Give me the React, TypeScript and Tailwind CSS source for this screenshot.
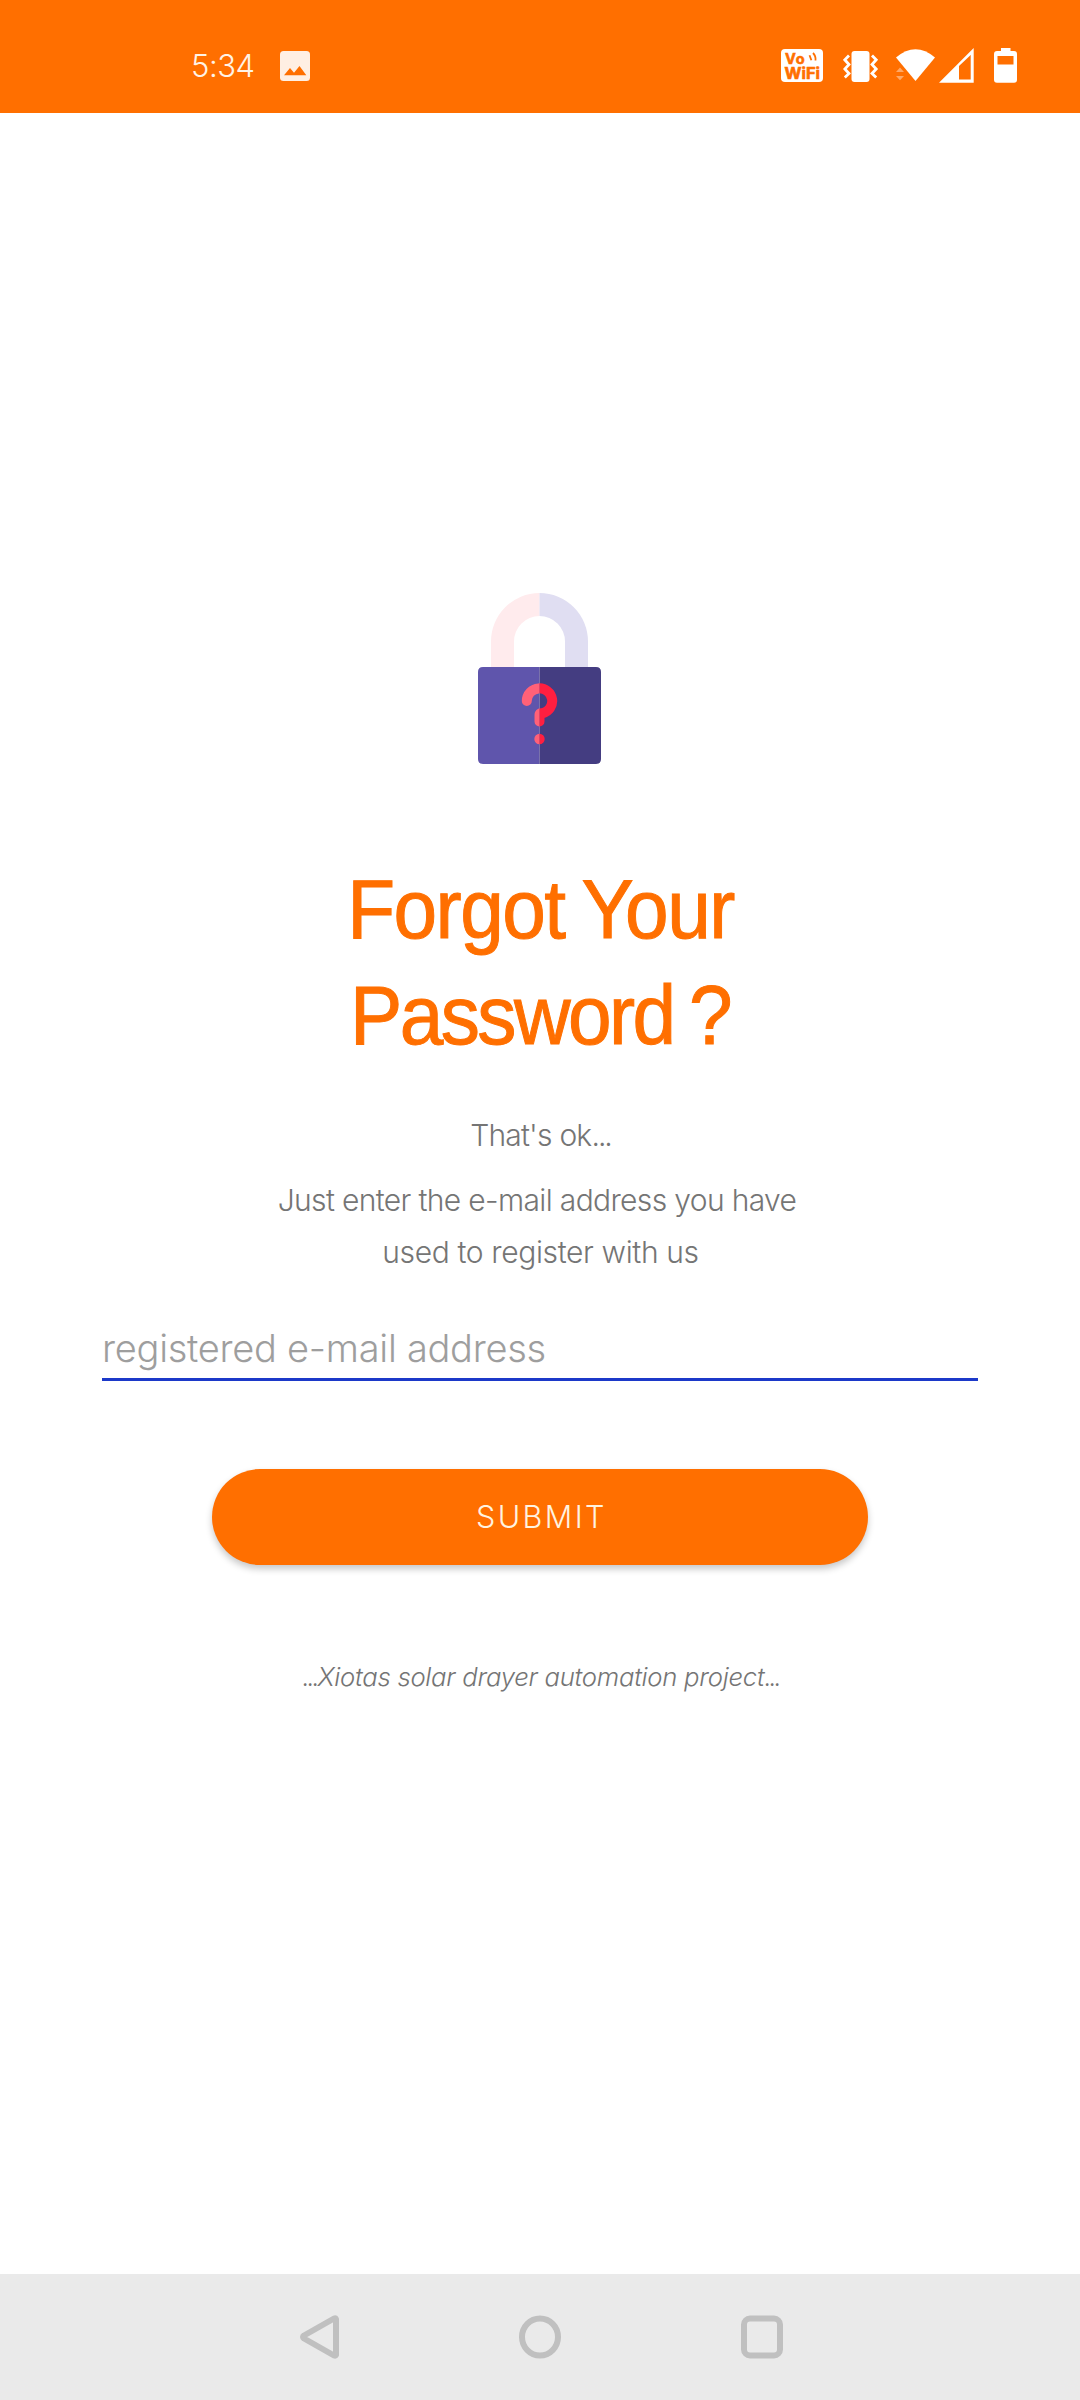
function StatusBar() {
  return (
    <header className="flex h-[113px] shrink-0 items-start bg-[#ff6f00] text-white">
      <span className="ml-[191px] mt-[46px] w-[66px] whitespace-nowrap text-[31px] font-light leading-[40px] tracking-[-0.47px] text-[#fff3e6]">
        5:34
      </span>
      <svg className="ml-[23px] mt-[51px] h-[30px] w-[30px]" viewBox="0 0 30 30">
        <rect width="30" height="30" rx="3.5" fill="#ffefe3" />
        <path d="M4 24.3 L10 17 L14 21.7 L19.5 15 L26.3 24.3 Z" fill="#ff6f00" />
      </svg>
      <svg className="ml-[471px] mt-[48px] h-[36px] w-[42px]" viewBox="0 0 42 36">
        <rect y="1" width="42" height="33" rx="4" fill="#fff" />
        <g fill="#ff6f00" stroke="#ff6f00" strokeWidth="0.6" fontFamily="Inter, sans-serif" fontWeight="700">
          <text x="4" y="15.5" fontSize="14.5" letterSpacing="0.8">Vo</text>
          <text x="3.5" y="30.5" fontSize="15.5" textLength="35.5" lengthAdjust="spacingAndGlyphs">WiFi</text>
        </g>
        <path d="M28.5 7.3 L30.4 12.3 M32 5 Q35 8 34.5 12.5" stroke="#ff6f00" strokeWidth="1.8" fill="none" />
      </svg>
      <svg className="ml-[20px] mt-[48px] h-[36px] w-[36px]" viewBox="0 0 36 36">
        <rect x="8.5" y="3" width="18" height="31" rx="3" fill="#fff" />
        <path
          d="M6 7.5 L1.8 11.8 L6 16.5 L1.8 21 L6 25.5 L1.8 29.5 M29 7.5 L33.2 11.8 L29 16.5 L33.2 21 L29 25.5 L33.2 29.5"
          stroke="#fff"
          strokeWidth="2.8"
          fill="none"
        />
      </svg>
      <svg className="ml-[17px] mt-[48px] h-[36px] w-[40px]" viewBox="0 0 40 36">
        <path d="M0 9.5 Q19.5 -7 39 9.5 L19.5 33 Z" fill="#fff" />
        <path d="M0 24 L4 19.5 L8 24 Z M0 28 L4 32.3 L8 28 Z" fill="#ffa866" />
      </svg>
      <svg className="ml-[3px] mt-[48px] h-[36px] w-[35px]" viewBox="0 0 35 36">
        <path fillRule="evenodd" d="M34.7 0 V34.8 H0 Z M31.7 7 V31.5 H20 V18 Z" fill="#fff" />
      </svg>
      <svg className="ml-[20px] mt-[48px] h-[36px] w-[23px]" viewBox="0 0 23 36">
        <path
          fillRule="evenodd"
          d="M7 0 H16.5 V3 H20 Q23 3 23 6 V31.8 Q23 34.8 20 34.8 H3 Q0 34.8 0 31.8 V6 Q0 3 3 3 H7 Z M3.5 8 V16.5 H19.5 V8 Z"
          fill="#fff"
        />
      </svg>
    </header>
  );
}

const QUESTION_HOOK = "M48.8 108 A12.7 12.7 0 1 1 64.5 120.4 Q61.5 119.5 61.5 122 V128.5";

function LockIcon() {
  return (
    <svg className="mr-[1px] mt-[480px] h-[171px] w-[123px] shrink-0" viewBox="0 0 123 171">
      <path d="M13 75 V48.5 A48.5 48.5 0 0 1 61.5 0 V23 A25.5 25.5 0 0 0 36 48.5 V75 Z" fill="#ffebed" />
      <path d="M61.5 0 A48.5 48.5 0 0 1 110 48.5 V75 H87 V48.5 A25.5 25.5 0 0 0 61.5 23 Z" fill="#e0def2" />
      <path d="M61.5 74 H5 Q0 74 0 79 V166 Q0 171 5 171 H61.5 Z" fill="#5f55ac" />
      <path d="M61.5 74 H118 Q123 74 123 79 V166 Q123 171 118 171 H61.5 Z" fill="#443d81" />
      <clipPath id="left">
        <rect width="61.5" height="171" />
      </clipPath>
      <clipPath id="right">
        <rect x="61.5" width="61.5" height="171" />
      </clipPath>
      <g clipPath="url(#left)">
        <path d={QUESTION_HOOK} fill="none" stroke="#ff6178" strokeWidth="10" strokeLinecap="round" />
        <circle cx="61.5" cy="146" r="5.2" fill="#ff6178" />
      </g>
      <g clipPath="url(#right)">
        <path d={QUESTION_HOOK} fill="none" stroke="#ff1f40" strokeWidth="10" strokeLinecap="round" />
        <circle cx="61.5" cy="146" r="5.2" fill="#ff1f40" />
      </g>
    </svg>
  );
}

function NavBar() {
  return (
    <nav className="flex h-[126px] shrink-0 items-start bg-[#eaeaea] pt-[41px]">
      <svg className="ml-[299px] h-[44px] w-[41px]" viewBox="0 0 41 44" fill="none" stroke="#c0c0c0" strokeWidth="6" strokeLinejoin="round">
        <path d="M37 4 V40 Q36.5 41 35 40.5 L5 23.5 Q3 22 5 20.5 L35 3.5 Q36.5 3 37 4 Z" />
      </svg>
      <svg className="ml-[179px] h-[44px] w-[42px]" viewBox="0 0 42 44" fill="none" stroke="#c0c0c0" strokeWidth="6">
        <ellipse cx="21" cy="22" rx="18" ry="18.5" />
      </svg>
      <svg className="ml-[180px] h-[44px] w-[42px]" viewBox="0 0 42 44" fill="none" stroke="#c0c0c0" strokeWidth="6">
        <rect x="3" y="3.5" width="36" height="37" rx="6" />
      </svg>
    </nav>
  );
}

export default function App() {
  return (
    <div className="flex h-[2400px] w-[1080px] flex-col overflow-hidden bg-white font-['Inter',sans-serif]">
      <StatusBar />
      <main className="flex flex-1 flex-col items-center">
        <LockIcon />
        <h1 className="mt-[92px] flex scale-x-95 flex-col items-center whitespace-nowrap font-['Liberation_Sans',sans-serif] text-[82.5px] font-normal leading-[106px] text-[#ff6f00] [-webkit-text-stroke:1px_#ff6f00]">
          <span className="tracking-[-1.6px] [word-spacing:-2px]">Forgot Your</span>
          <span className="pr-[1px] tracking-[-2.7px] [word-spacing:-4px]">Password ?</span>
        </h1>
        <p className="mt-[41px] pl-[1px] text-[30px] font-light leading-[52px] tracking-[-0.8px] text-[#757575]">
          That's ok<span className="tracking-[-2px]">...</span>
        </p>
        <p className="mt-[13px] flex flex-col items-center whitespace-nowrap text-[30px] font-light leading-[52px] text-[#757575]">
          <span className="pr-[6px] tracking-[-0.65px]">Just enter the e-mail address you have</span>
          <span className="pl-[1px] tracking-[-0.36px]">used to register with us</span>
        </p>
        <input
          className="mt-[46px] h-[57px] w-[876px] border-b-[3px] border-[#1c39c9] pb-[6px] text-[38px] font-light leading-[48px] tracking-[-0.27px] outline-none placeholder:text-[#9e9e9e]"
          placeholder="registered e-mail address"
        />
        <button className="mt-[88px] h-[96px] w-[656px] rounded-full bg-[#ff6f00] pl-[3px] text-[30.5px] font-light tracking-[2.4px] text-[#fff3e0] shadow-[0_4px_7px_rgba(0,0,0,0.22)]">
          SUBMIT
        </button>
        <p className="mt-[92px] pl-[2px] text-[25.7px] font-light italic leading-[40px] tracking-[-0.27px] text-[#757575]">
          <span className="tracking-[-2.2px]">...</span>Xiotas solar drayer automation project<span className="tracking-[-2.2px]">...</span>
        </p>
      </main>
      <NavBar />
    </div>
  );
}
